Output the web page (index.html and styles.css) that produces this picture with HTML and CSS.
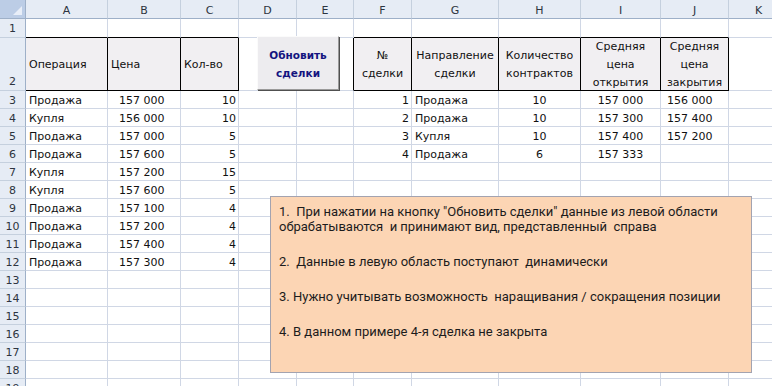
FILE: index.html
```html
<!DOCTYPE html>
<html lang="ru">
<head>
<meta charset="utf-8">
<title>Сделки</title>
<link rel="stylesheet" href="styles.css">
</head>
<body>
<div class="sheet">
  <div class="row colhead">
    <div class="corner"><svg width="26" height="19" viewBox="0 0 26 19"><polygon points="22,6 22,15 13,15" fill="#e8eef8"/></svg></div>
    <div>A</div><div>B</div><div>C</div><div>D</div><div>E</div><div>F</div><div>G</div><div>H</div><div>I</div><div>J</div><div>K</div>
  </div>
  <div class="row r1">
    <div class="rh">1</div>
    <div class="bb"></div><div class="bb"></div><div class="bb"></div><div></div><div></div>
    <div class="bb"></div><div class="bb"></div><div class="bb"></div><div class="bb"></div><div class="bb"></div><div></div>
  </div>
  <div class="row r2">
    <div class="rh">2</div>
    <div class="hd left">Операция</div>
    <div class="hd left">Цена</div>
    <div class="hd left">Кол-во</div>
    <div></div>
    <div class="br"></div>
    <div class="hd">№<br>сделки</div>
    <div class="hd">Направление<br>сделки</div>
    <div class="hd">Количество<br>контрактов</div>
    <div class="hd">Средняя<br>цена<br>открытия</div>
    <div class="hd">Средняя<br>цена<br>закрытия</div>
    <div></div>
  </div>
  <div class="row"><div class="rh">3</div><div class="a">Продажа</div><div class="b">157 000</div><div class="c">10</div><div></div><div></div><div class="f">1</div><div class="g">Продажа</div><div class="h">10</div><div class="i">157 000</div><div class="j">156 000</div><div></div></div>
  <div class="row"><div class="rh">4</div><div class="a">Купля</div><div class="b">156 000</div><div class="c">10</div><div></div><div></div><div class="f">2</div><div class="g">Продажа</div><div class="h">10</div><div class="i">157 300</div><div class="j">157 400</div><div></div></div>
  <div class="row"><div class="rh">5</div><div class="a">Продажа</div><div class="b">157 000</div><div class="c">5</div><div></div><div></div><div class="f">3</div><div class="g">Купля</div><div class="h">10</div><div class="i">157 400</div><div class="j">157 200</div><div></div></div>
  <div class="row"><div class="rh">6</div><div class="a">Продажа</div><div class="b">157 600</div><div class="c">5</div><div></div><div></div><div class="f">4</div><div class="g">Продажа</div><div class="h">6</div><div class="i">157 333</div><div class="j"></div><div></div></div>
  <div class="row"><div class="rh">7</div><div class="a">Купля</div><div class="b">157 200</div><div class="c">15</div><div></div><div></div><div></div><div></div><div></div><div></div><div></div><div></div></div>
  <div class="row"><div class="rh">8</div><div class="a">Купля</div><div class="b">157 600</div><div class="c">5</div><div></div><div></div><div></div><div></div><div></div><div></div><div></div><div></div></div>
  <div class="row"><div class="rh">9</div><div class="a">Продажа</div><div class="b">157 100</div><div class="c">4</div><div></div><div></div><div></div><div></div><div></div><div></div><div></div><div></div></div>
  <div class="row"><div class="rh">10</div><div class="a">Продажа</div><div class="b">157 200</div><div class="c">4</div><div></div><div></div><div></div><div></div><div></div><div></div><div></div><div></div></div>
  <div class="row"><div class="rh">11</div><div class="a">Продажа</div><div class="b">157 400</div><div class="c">4</div><div></div><div></div><div></div><div></div><div></div><div></div><div></div><div></div></div>
  <div class="row"><div class="rh">12</div><div class="a">Продажа</div><div class="b">157 300</div><div class="c">4</div><div></div><div></div><div></div><div></div><div></div><div></div><div></div><div></div></div>
  <div class="row"><div class="rh">13</div><div></div><div></div><div></div><div></div><div></div><div></div><div></div><div></div><div></div><div></div><div></div></div>
  <div class="row"><div class="rh">14</div><div></div><div></div><div></div><div></div><div></div><div></div><div></div><div></div><div></div><div></div><div></div></div>
  <div class="row"><div class="rh">15</div><div></div><div></div><div></div><div></div><div></div><div></div><div></div><div></div><div></div><div></div><div></div></div>
  <div class="row"><div class="rh">16</div><div></div><div></div><div></div><div></div><div></div><div></div><div></div><div></div><div></div><div></div><div></div></div>
  <div class="row"><div class="rh">17</div><div></div><div></div><div></div><div></div><div></div><div></div><div></div><div></div><div></div><div></div><div></div></div>
  <div class="row"><div class="rh">18</div><div></div><div></div><div></div><div></div><div></div><div></div><div></div><div></div><div></div><div></div><div></div></div>
  <div class="row"><div class="rh">19</div><div></div><div></div><div></div><div></div><div></div><div></div><div></div><div></div><div></div><div></div><div></div></div>

  <div class="button">Обновить<br>сделки</div>

  <div class="note">
    <p>1.  При нажатии на кнопку "Обновить сделки" данные из левой области<br>обрабатываются  и принимают вид, представленный  справа</p>
    <p>2.  Данные в левую область поступают  динамически</p>
    <p>3. Нужно учитывать возможность  наращивания / сокращения позиции</p>
    <p>4. В данном примере 4-я сделка не закрыта</p>
  </div>
</div>
</body>
</html>
```

FILE: styles.css
```css
html, body {
  margin: 0;
  padding: 0;
  background: #ffffff;
  overflow: hidden;
}

.sheet {
  position: relative;
  width: 772px;
  height: 386px;
  overflow: hidden;
  font-family: "DejaVu Sans", Verdana, sans-serif;
  font-size: 11px;
  color: #111111;
}

.row {
  display: grid;
  grid-template-columns: 26px 82px 73px 58px 58px 57px 58px 87px 82px 80px 68px 60px;
  height: 18px;
}

.row > div {
  box-sizing: border-box;
  border-right: 1px solid #d0d7e5;
  border-bottom: 1px solid #d0d7e5;
  line-height: 18px;
  padding-top: 1px;
  white-space: nowrap;
  overflow: hidden;
}

.row.colhead { height: 19px; }
.row.r1 { height: 19px; }
.row.r2 { height: 53px; }

.colhead > div {
  background: #e6ecf5;
  border-right: 1px solid #c5d0de;
  border-bottom: 1px solid #9eb0c8;
  text-align: center;
  color: #2d3440;
  line-height: 19px;
  padding-top: 1px;
}

.colhead > .corner {
  background: #bccde6;
  padding: 0;
  border-right: 1px solid #9eb0c8;
}

.corner svg { display: block; }

.row > .rh {
  background: #e6ecf5;
  border-right: 1px solid #9eb0c8;
  border-bottom: 1px solid #c5d0de;
  text-align: center;
  color: #2d3440;
}

.r2 > .rh {
  display: flex;
  align-items: flex-end;
  justify-content: center;
  padding-bottom: 0;
  line-height: 16px;
}

.r1 > .bb { border-bottom-color: #000000; }
.r2 > .br { border-right-color: #000000; }

.r2 > .hd {
  background: #f1eff2;
  border-right-color: #000000;
  border-bottom-color: #000000;
  display: flex;
  flex-direction: column;
  justify-content: center;
  align-items: center;
  text-align: center;
  line-height: 18px;
  padding-top: 1px;
}

.r2 > .hd.left {
  align-items: flex-start;
  padding-left: 3px;
  padding-top: 2px;
}

.a { padding-left: 3px; }
.b { padding-left: 11px; }
.c { text-align: right; padding-right: 2px; }
.f { text-align: right; padding-right: 2px; }
.g { padding-left: 3px; }
.h { text-align: center; }
.i { text-align: center; }
.j { padding-left: 6px; }

.button {
  position: absolute;
  left: 257px;
  top: 36px;
  width: 82px;
  height: 54px;
  box-sizing: border-box;
  background: #edecef;
  border-top: 1px solid #fbfbfb;
  border-left: 1px solid #fbfbfb;
  border-right: 1px solid #9a9a9a;
  border-bottom: 1px solid #9a9a9a;
  box-shadow: 1px 1px 0 #505050;
  font-weight: bold;
  font-size: 10.5px;
  color: #141480;
  text-align: center;
  line-height: 18px;
  padding-top: 9px;
}

.note {
  position: absolute;
  left: 270px;
  top: 196px;
  width: 482px;
  height: 177px;
  box-sizing: border-box;
  background: #fcd5b4;
  border: 1px solid #a3a3b0;
  font-family: Roboto, "Open Sans", sans-serif;
  font-size: 13px;
  color: #1c1c1c;
  padding: 7px 0 0 8px;
}

.note p {
  margin: 0 0 20px 0;
  line-height: 15px;
  white-space: pre;
}
```
